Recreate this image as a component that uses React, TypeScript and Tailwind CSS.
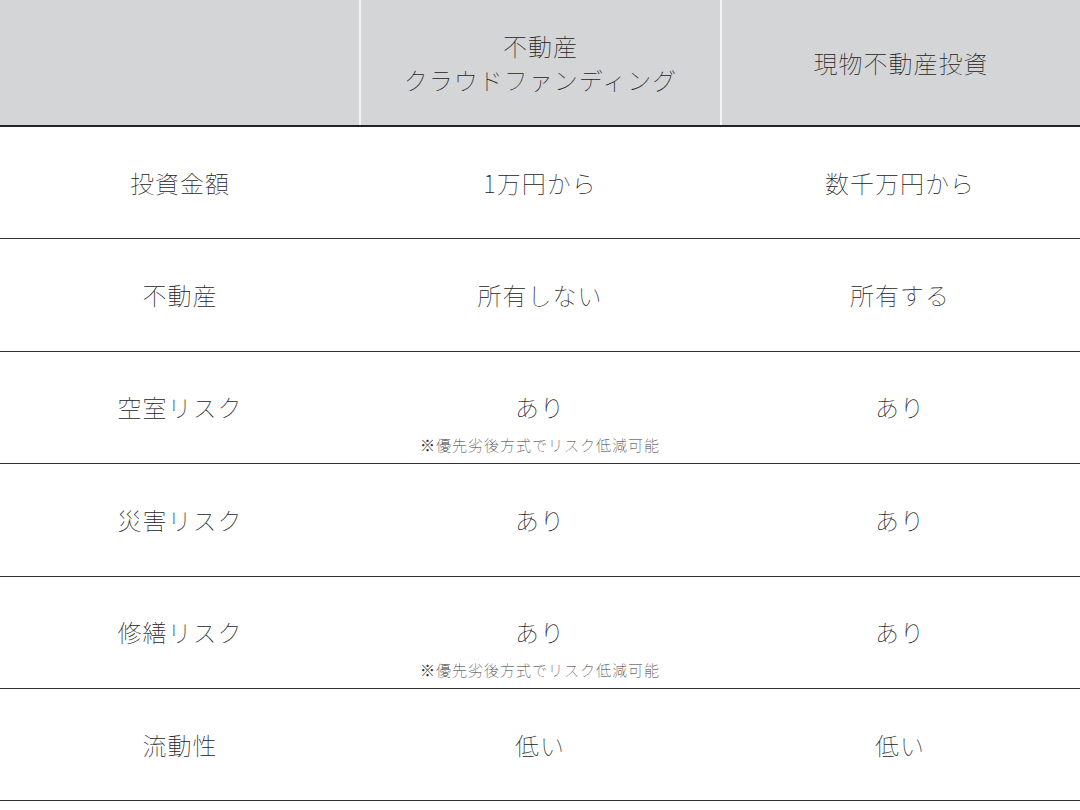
import React from "react";

const rows: { label: string; a: string; b: string; note?: string }[] = [
  { label: "投資金額", a: "1万円から", b: "数千万円から" },
  { label: "不動産", a: "所有しない", b: "所有する" },
  { label: "空室リスク", a: "あり", b: "あり", note: "※優先劣後方式でリスク低減可能" },
  { label: "災害リスク", a: "あり", b: "あり" },
  { label: "修繕リスク", a: "あり", b: "あり", note: "※優先劣後方式でリスク低減可能" },
  { label: "流動性", a: "低い", b: "低い" },
];

function Cell({ text, note }: { text: string; note?: string }) {
  return (
    <div className="flex flex-col items-center h-full">
      <div className="flex-1" />
      <div className="text-[24px] leading-[34px] tracking-[1px]">{text}</div>
      <div className="flex-1 w-full flex justify-center">
        {note && (
          <div className="text-[15px] leading-[20px] tracking-[1px] text-[#333] mt-[11px]">{note}</div>
        )}
      </div>
    </div>
  );
}

export default function App() {
  return (
    <div
      className="w-[1080px] h-[810px] bg-white text-[#222] font-thin"
      style={{ fontFamily: '"Noto Sans CJK JP", "Noto Sans", sans-serif' }}
    >
      <div className="grid grid-cols-[359px_2px_359px_2px_358px] h-[127px] bg-[#d4d5d7] border-b-2 border-[#222]">
        <div />
        <div className="bg-[#f4f4f4]" />
        <div className="flex flex-col items-center justify-center text-[24px] leading-[34px] tracking-[1px]">
          <div>不動産</div>
          <div>クラウドファンディング</div>
        </div>
        <div className="bg-[#f4f4f4]" />
        <div className="flex items-center justify-center text-[24px] leading-[34px] tracking-[1px]">
          現物不動産投資
        </div>
      </div>
      {rows.map((r) => (
        <div
          key={r.label}
          className="grid grid-cols-3 h-[112.4px] border-b-[1.5px] border-[#333]"
        >
          <Cell text={r.label} />
          <Cell text={r.a} note={r.note} />
          <Cell text={r.b} />
        </div>
      ))}
    </div>
  );
}
